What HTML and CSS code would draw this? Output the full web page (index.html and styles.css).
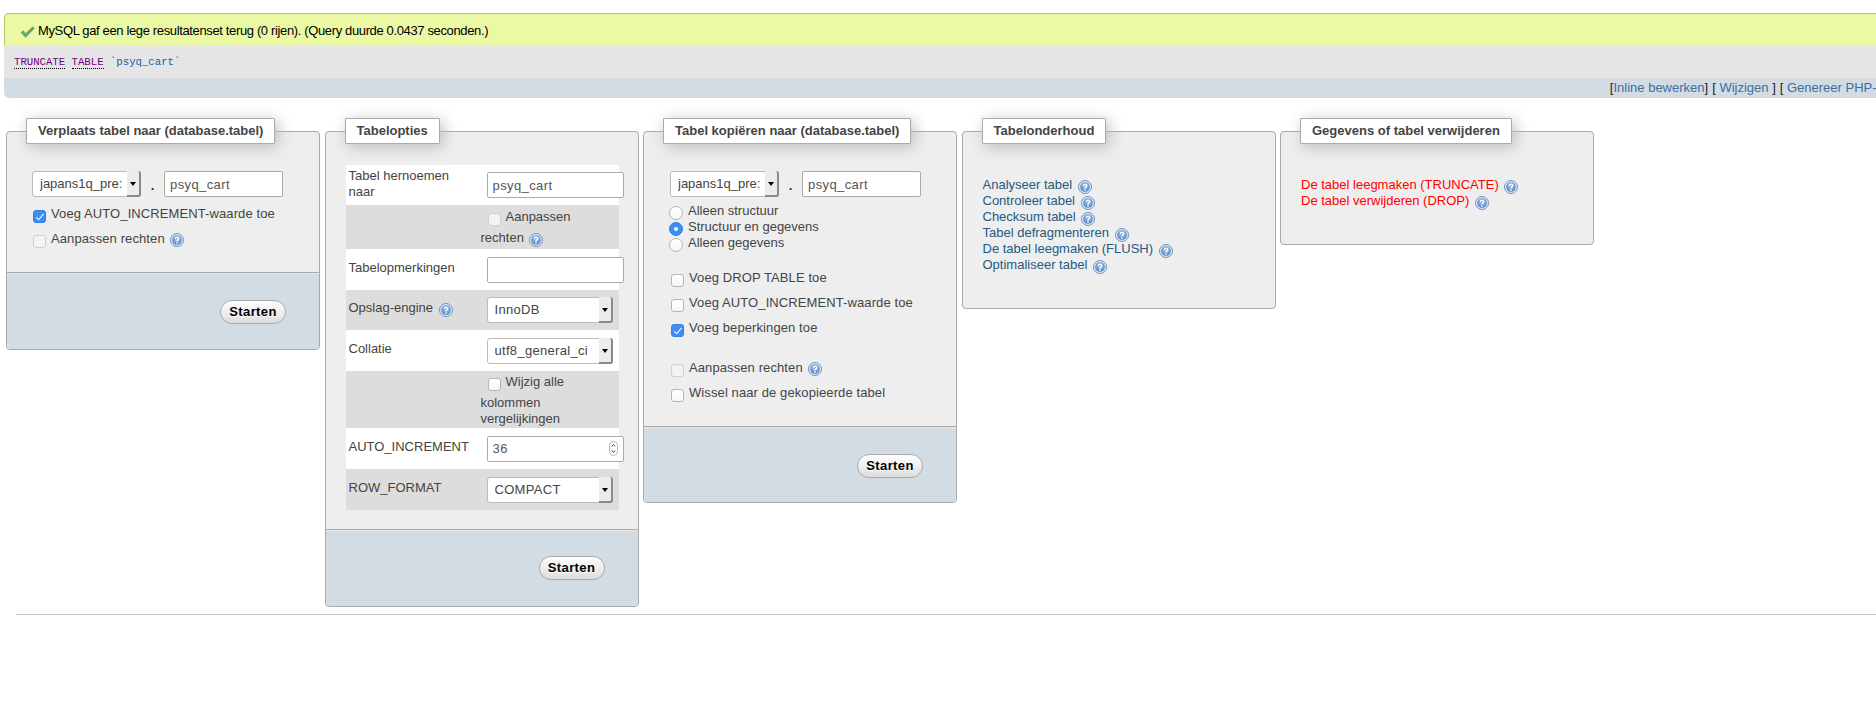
FILE: index.html
```html
<!DOCTYPE html>
<html lang="nl">
<head>
<meta charset="utf-8">
<title>phpMyAdmin - psyq_cart</title>
<link rel="stylesheet" href="styles.css">
</head>
<body>
<svg class="defs" width="0" height="0" aria-hidden="true">
  <defs>
    <radialGradient id="helpfill" cx="50%" cy="40%" r="60%">
      <stop offset="0" stop-color="#a9c4e6"/>
      <stop offset="0.7" stop-color="#6f9bd2"/>
      <stop offset="1" stop-color="#4a78b4"/>
    </radialGradient>
    <symbol id="help" viewBox="0 0 14 14">
      <circle cx="7" cy="7" r="6.5" fill="#dbe6f4" stroke="#6c94c6" stroke-width="1"/>
      <circle cx="7" cy="7" r="4.8" fill="url(#helpfill)"/>
      <path d="M5.3 5.7c0-2.2 3.5-2.2 3.5-.1 0 1.3-1.8 1.3-1.8 2.8" fill="none" stroke="#fff" stroke-width="1.3"/>
      <circle cx="7" cy="10" r=".85" fill="#fff"/>
    </symbol>
  </defs>
</svg>

<div class="result">
  <div class="notice">
    <svg class="tick" width="15" height="12" viewBox="0 0 15 12"><path d="M1 6.5 3.2 4.6 5.6 7.4 12.6.8 14.4 2.4 5.7 11.4Z" fill="#62ab62" stroke="#7d9f7d" stroke-width=".6"/></svg>
    <span>MySQL gaf een lege resultatenset terug (0 rijen). (Query duurde 0.0437 seconden.)</span>
  </div>
  <div class="sql"><code><span class="kw">TRUNCATE</span> <span class="kw">TABLE</span> <span class="name">`psyq_cart`</span></code></div>
  <div class="tools">
    <span>[<a href="#">Inline bewerken</a>]</span>
    <span>[ <a href="#">Wijzigen</a> ]</span>
    <span>[ <a href="#">Genereer PHP-code</a> ]</span>
  </div>
</div>

<div class="panels">
  <fieldset class="panel">
    <legend>Verplaats tabel naar (database.tabel)</legend>
    <div class="body body-move">
      <div class="target">
        <div class="sel sel-db"><select><option>japans1q_pre:</option></select></div>
        <span class="dot">.</span>
        <input class="field field-target" type="text" value="psyq_cart">
      </div>
      <label class="opt opt-first"><input type="checkbox" checked><span>Voeg AUTO_INCREMENT-waarde toe</span></label>
      <label class="opt"><input type="checkbox" disabled><span>Aanpassen rechten</span><svg class="help"><use href="#help"/></svg></label>
    </div>
    <div class="foot foot-move"><button type="button">Starten</button></div>
  </fieldset>

  <fieldset class="panel">
    <legend>Tabelopties</legend>
    <div class="body body-options">
      <table class="options">
        <tr class="r40"><td>Tabel hernoemen naar</td><td><input class="field field-cell" type="text" value="psyq_cart"></td></tr>
        <tr class="alt r44"><td></td><td><label class="wrap"><input type="checkbox" disabled>Aanpassen rechten <svg class="help"><use href="#help"/></svg></label></td></tr>
        <tr class="r41"><td>Tabelopmerkingen</td><td><input class="field field-cell" type="text"></td></tr>
        <tr class="alt r40"><td>Opslag-engine <svg class="help"><use href="#help"/></svg></td><td><div class="sel sel-cell"><select><option>InnoDB</option></select></div></td></tr>
        <tr class="r41"><td>Collatie</td><td><div class="sel sel-cell"><select><option>utf8_general_ci</option></select></div></td></tr>
        <tr class="alt r57"><td></td><td><label class="wrap"><input type="checkbox">Wijzig alle kolommen vergelijkingen</label></td></tr>
        <tr class="r41"><td>AUTO_INCREMENT</td><td><div class="spin"><input class="field field-cell" type="text" value="36"><svg class="stepper" width="9" height="15" viewBox="0 0 9 15"><rect x=".5" y=".5" width="8" height="14" rx="4" fill="#fff" stroke="#bbb"/><path d="M2.8 5.6 4.5 3.4 6.2 5.6M2.8 9.4 4.5 11.6 6.2 9.4" fill="none" stroke="#555"/></svg></div></td></tr>
        <tr class="alt r41"><td>ROW_FORMAT</td><td><div class="sel sel-cell"><select><option>COMPACT</option></select></div></td></tr>
      </table>
    </div>
    <div class="foot foot-options"><button type="button">Starten</button></div>
  </fieldset>

  <fieldset class="panel">
    <legend>Tabel kopiëren naar (database.tabel)</legend>
    <div class="body body-copy">
      <div class="target">
        <div class="sel sel-db"><select><option>japans1q_pre:</option></select></div>
        <span class="dot">.</span>
        <input class="field field-target" type="text" value="psyq_cart">
      </div>
      <div class="radios">
        <label class="radio"><input type="radio" name="what"><span>Alleen structuur</span></label>
        <label class="radio"><input type="radio" name="what" checked><span>Structuur en gegevens</span></label>
        <label class="radio"><input type="radio" name="what"><span>Alleen gegevens</span></label>
      </div>
      <div class="group">
        <label class="opt"><input type="checkbox"><span>Voeg DROP TABLE toe</span></label>
        <label class="opt"><input type="checkbox"><span>Voeg AUTO_INCREMENT-waarde toe</span></label>
        <label class="opt"><input type="checkbox" checked><span>Voeg beperkingen toe</span></label>
      </div>
      <div class="group group-last">
        <label class="opt"><input type="checkbox" disabled><span>Aanpassen rechten</span><svg class="help"><use href="#help"/></svg></label>
        <label class="opt"><input type="checkbox"><span>Wissel naar de gekopieerde tabel</span></label>
      </div>
    </div>
    <div class="foot foot-copy"><button type="button">Starten</button></div>
  </fieldset>

  <fieldset class="panel">
    <legend>Tabelonderhoud</legend>
    <ul class="links body-links">
      <li><a href="#">Analyseer tabel</a> <svg class="help"><use href="#help"/></svg></li>
      <li><a href="#">Controleer tabel</a> <svg class="help"><use href="#help"/></svg></li>
      <li><a href="#">Checksum tabel</a> <svg class="help"><use href="#help"/></svg></li>
      <li><a href="#">Tabel defragmenteren</a> <svg class="help"><use href="#help"/></svg></li>
      <li><a href="#">De tabel leegmaken (FLUSH)</a> <svg class="help"><use href="#help"/></svg></li>
      <li><a href="#">Optimaliseer tabel</a> <svg class="help"><use href="#help"/></svg></li>
    </ul>
  </fieldset>

  <fieldset class="panel">
    <legend>Gegevens of tabel verwijderen</legend>
    <ul class="links danger body-links">
      <li><a href="#">De tabel leegmaken (TRUNCATE)</a> <svg class="help"><use href="#help"/></svg></li>
      <li><a href="#">De tabel verwijderen (DROP)</a> <svg class="help"><use href="#help"/></svg></li>
    </ul>
  </fieldset>
</div>

<hr class="rule">
</body>
</html>
```
FILE: styles.css
```css
html, body {
  margin: 0;
  height: 100%;
  overflow: hidden;
  background: #fff;
}
body {
  font: 13px/16px "Liberation Sans", Arial, sans-serif;
  color: #444;
}
a { color: #235a81; text-decoration: none; }
.defs { display: block; height: 0; }

/* result block */
.result {
  width: 2100px;
  margin: 13px 0 0 4px;
}
.notice {
  box-sizing: border-box;
  display: flex;
  align-items: center;
  gap: 3px;
  height: 32px;
  padding: 2px 0 0 15px;
  background: #ebf8a4;
  border-top: 1px solid #a9c96a;
  border-left: 1px solid #a9c96a;
  border-top-left-radius: 5px;
  color: #000;
  letter-spacing: -.36px;
}
.tick { margin-top: 3px; }
.sql {
  height: 33px;
  padding-left: 10px;
  background: #e5e5e5;
  display: flex;
  align-items: center;
}
.sql code {
  font: 10.67px/14px "Liberation Mono", "Courier New", monospace;
  white-space: pre;
}
.kw { color: #770088; border-bottom: 1px dotted #000; }
.name { color: #1a5ea8; }
.tools {
  display: flex;
  justify-content: flex-end;
  gap: 4px;
  height: 20px;
  padding-right: 192px;
  line-height: 19px;
  background: #d3dce3;
  border-bottom-left-radius: 5px;
  color: #222;
  white-space: nowrap;
}
.tools a { color: #3a6f9f; }

/* panels */
.panels {
  display: flex;
  align-items: flex-start;
  gap: 4.5px;
  margin: 20px 0 0 6px;
}
.panel {
  box-sizing: border-box;
  flex: 0 0 314px;
  width: 314px;
  min-width: 0;
  margin: 0;
  padding: 0;
  background: #eee;
  border: 1px solid #aaa;
  border-radius: 4px;
}
.panel legend {
  box-sizing: border-box;
  height: 26px;
  margin-left: 19px;
  padding: 0 11px;
  line-height: 24px;
  font-weight: bold;
  background: #fff;
  border: 1px solid #aaa;
  border-radius: 1px;
  box-shadow: 3px 3px 15px #bbb;
  white-space: nowrap;
}
.body-move { box-sizing: border-box; padding: 27px 0 0 25px; height: 128px; }
.body-options { padding: 21px 0 19px 20px; }
.body-copy { padding: 27px 0 21px 26px; }

.foot {
  box-sizing: border-box;
  display: flex;
  justify-content: flex-end;
  align-items: flex-start;
  padding: 27px 33px 0 0;
  background: #d3dce3;
  border-top: 1px solid #aaa;
  box-shadow: inset 0 2px 2px -1px #e6e6e6;
  border-radius: 0 0 3px 3px;
}
.foot-move { height: 77px; }
.foot-options { height: 77px; padding-top: 26px; }
.foot-copy { height: 76px; }
.foot button {
  box-sizing: border-box;
  width: 66px;
  height: 24px;
  padding: 0;
  font: bold 13px/20px "Liberation Sans", Arial, sans-serif;
  letter-spacing: .4px;
  color: #000;
  text-shadow: 0 1px 0 #fff;
  background: linear-gradient(#fff, #ddd);
  border: 1px solid #aaa;
  border-radius: 12px;
}

/* controls */
.target { display: flex; align-items: center; }
.dot {
  width: 23px;
  text-align: center;
  font-weight: bold;
  color: #333;
  margin-top: 3px;
}
.field {
  box-sizing: border-box;
  height: 26px;
  padding: 0 5px;
  font: 13px/16px "Liberation Sans", Arial, sans-serif;
  letter-spacing: .4px;
  color: #555;
  background: #fff;
  border: 1px solid #aaa;
  border-radius: 2px;
  outline: 0;
}
.field-target { width: 119px; }
.field-cell { display: block; width: 137px; margin-left: 6px; }
.sel {
  box-sizing: border-box;
  position: relative;
  height: 26px;
  background: #fff;
  border: 1px solid #bbb;
  border-radius: 3px;
}
.sel select {
  appearance: none;
  width: 100%;
  height: 100%;
  margin: 0;
  padding: 0 14px 0 7px;
  font: 13px/16px "Liberation Sans", Arial, sans-serif;
  letter-spacing: .3px;
  color: #444;
  background: transparent;
  border: 0;
  outline: 0;
}
.sel::before {
  content: "";
  position: absolute;
  top: -1px;
  right: -1px;
  bottom: -1px;
  width: 14px;
  background: #ececec;
  border-right: 2px solid #8a8a8a;
  border-bottom: 2px solid #8a8a8a;
  border-radius: 0 3px 3px 0;
  box-sizing: border-box;
}
.sel::after {
  content: "";
  position: absolute;
  top: 10px;
  right: 4px;
  border: 3.5px solid transparent;
  border-top: 4px solid #000;
  border-bottom: 0;
}
.sel-db { width: 109px; }
.sel-db select { letter-spacing: 0; padding-right: 16px; }
.sel-cell { width: 126px; margin-left: 6px; }
.spin { position: relative; }
.stepper { position: absolute; top: 5px; left: 128px; }

input[type="checkbox"], input[type="radio"] {
  appearance: none;
  box-sizing: border-box;
  position: relative;
  flex: none;
  width: 13px;
  height: 13px;
  margin: 0;
  background: linear-gradient(#fff, #f7f7f7);
  border: 1px solid #b5b5b5;
}
input[type="checkbox"] { border-radius: 3px; }
input[type="radio"] { width: 14px; height: 14px; border-radius: 50%; }
input:disabled { background: #f3f3f3; border-color: #d0d0d0; }
input[type="checkbox"]:checked {
  background: #3f8cf5;
  border-color: #3380ea;
}
input[type="checkbox"]:checked::after {
  content: "";
  position: absolute;
  left: 3.5px;
  top: 1.5px;
  width: 3px;
  height: 6.5px;
  border: solid #fff;
  border-width: 0 1.5px 1.5px 0;
  transform: rotate(40deg);
}
input[type="radio"]:checked {
  background: #3f8cf5;
  border-color: #3380ea;
}
input[type="radio"]:checked::after {
  content: "";
  position: absolute;
  left: 4px;
  top: 4px;
  width: 4px;
  height: 4px;
  background: #fff;
  border-radius: 50%;
}
.opt {
  display: flex;
  align-items: center;
  height: 25px;
  gap: 5px;
  letter-spacing: .1px;
}
.opt input { margin: 5px 0 0 1px; }
.opt-first { margin-top: 4px; }
.help {
  flex: none;
  width: 14px;
  height: 14px;
  margin-left: 2px;
  vertical-align: -5px;
}
.opt .help { margin-left: 0; margin-top: 3px; }
.radios { margin: 6px 0 0 -1px; }
.radio {
  display: flex;
  align-items: center;
  height: 16px;
  gap: 5px;
}
.radio input { margin-top: 4px; }
.group { margin: 14px 0 0 0; }
.group-last { margin-top: 15px; }

/* options table */
.options {
  table-layout: fixed;
  width: 273px;
  border-collapse: collapse;
  background: #fff;
}
.options td { padding: 0 0 0 3px; vertical-align: middle; }
.options td:first-child { width: 129px; padding-bottom: 3px; }
.options .alt { background: #ddd; }
.r40 { height: 40px; }
.r41 { height: 41px; }
.r44 { height: 44px; }
.r57 { height: 57px; }
.wrap { display: block; padding-right: 30px; }
.wrap input { margin: 6px 5px 4px 7px; vertical-align: -9px; }

/* link lists */
.links {
  list-style: none;
  margin: 0;
  padding: 33px 20px 35px 20px;
}
.links li { height: 16px; white-space: nowrap; }
.danger a { color: #f00; }

.rule {
  margin: 7px 0 0 16px;
  height: 0;
  border: 0;
  border-top: 1px solid #c4c4c4;
}
```
